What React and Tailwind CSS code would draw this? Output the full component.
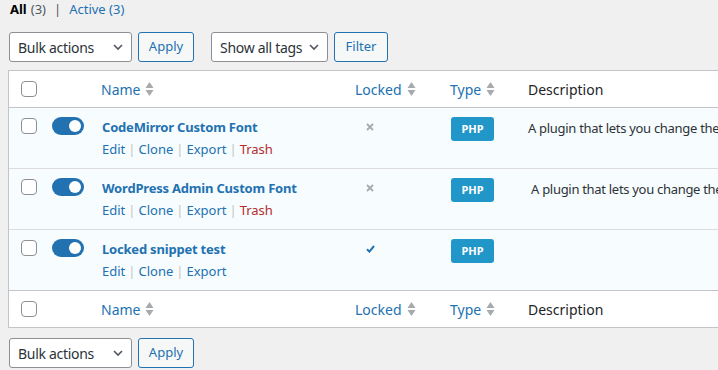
import React from 'react'

const font = { fontFamily: '"Noto Sans", "Open Sans", sans-serif' }

function SortIcon() {
  return (
    <svg width="9" height="16" viewBox="0 0 9 16" className="ml-[5px] shrink-0">
      <path d="M4.5 1 L8.5 7 L0.5 7 Z" fill="#a7aaad" />
      <path d="M4.5 15 L8.5 9 L0.5 9 Z" fill="#a7aaad" />
    </svg>
  )
}

function Checkbox() {
  return <div className="w-4 h-4 bg-white border border-[#8c8f94] rounded-[4px]" />
}

function Toggle() {
  return (
    <div className="w-8 h-[18px] rounded-full bg-[#2271b1] flex items-center justify-end pr-[3px]">
      <div className="w-3 h-3 rounded-full bg-white" />
    </div>
  )
}

function Select({ label, width }) {
  return (
    <div className={`${width} h-[30px] bg-white border border-[#8c8f94] rounded-[3px] flex items-center justify-between pl-2 pr-[7px] text-[14px] tracking-[-0.3px] text-[#2c3338]`}>
      <span>{label}</span>
      <svg width="12" height="12" viewBox="0 0 12 12">
        <path d="M2 4 L6 8 L10 4" fill="none" stroke="#50575e" strokeWidth="1.6" />
      </svg>
    </div>
  )
}

function Button({ label, width }) {
  return (
    <div className={`${width} h-[30px] bg-[#f6f7f7] border border-[#2271b1] rounded-[3px] flex items-center justify-center text-[13px] text-[#2271b1]`}>
      {label}
    </div>
  )
}

const cols = 'grid grid-cols-[34px_48px_254px_95px_78px_1fr]'

function HeaderRow({ border }) {
  return (
    <div className={`${cols} h-[37px] items-center bg-white text-[14px] ${border}`}>
      <div className="pl-3 flex"><Checkbox /></div>
      <div />
      <div className="pl-[10px] flex items-center text-[#2271b1]">Name<SortIcon /></div>
      <div className="pl-[10px] flex items-center text-[#2271b1]">Locked<SortIcon /></div>
      <div className="pl-[10px] flex items-center text-[#2271b1]">Type<SortIcon /></div>
      <div className="pl-[10px] text-[#1d2327]">Description</div>
    </div>
  )
}

const snippets = [
  { name: 'CodeMirror Custom Font', locked: false, desc: 'A plugin that lets you change the font of the code editor', trash: true },
  { name: 'WordPress Admin Custom Font', locked: false, desc: '\u00a0A plugin that lets you change the admin font', trash: true },
  { name: 'Locked snippet test', locked: true, desc: '', trash: false },
]

function Row({ s }) {
  const actions = ['Edit', 'Clone', 'Export']
  return (
    <div className={`${cols} h-[61px] bg-[#f7fcfe] border-b border-[#dcdcde]`}>
      <div className="pl-3 pt-[10px]"><Checkbox /></div>
      <div className="pl-[9px] pt-[9px]"><Toggle /></div>
      <div className="pl-[11px] pt-[9px]">
        <div className="text-[13px] font-bold text-[#2271b1] leading-[20px] tracking-[-0.2px]">{s.name}</div>
        <div className="text-[13px] leading-[18px] mt-[3px] flex items-center">
          {actions.map((a, i) => (
            <React.Fragment key={a}>
              {i > 0 && <span className="text-[#c3c4c7] mx-[3px]">|</span>}
              <span className="text-[#2271b1]">{a}</span>
            </React.Fragment>
          ))}
          {s.trash && (
            <>
              <span className="text-[#c3c4c7] mx-[3px]">|</span>
              <span className="text-[#b32d2e]">Trash</span>
            </>
          )}
        </div>
      </div>
      <div className="pl-[21px] pt-[15px]">
        {s.locked ? (
          <svg width="9" height="8" viewBox="0 0 9 8">
            <path d="M1 4.2 L3.4 6.6 L8 1" fill="none" stroke="#2271b1" strokeWidth="2" />
          </svg>
        ) : (
          <svg width="8" height="8" viewBox="0 0 8 8">
            <path d="M1 1 L7 7 M7 1 L1 7" stroke="#a7aaad" strokeWidth="1.8" />
          </svg>
        )}
      </div>
      <div className="pl-[11px] pt-[9px]">
        <div className="w-[43px] h-6 rounded-[3px] bg-[#2196c9] text-white text-[11px] font-bold flex items-center justify-center">PHP</div>
      </div>
      <div className="pl-[10px] pt-[11px] text-[13px] tracking-[-0.3px] text-[#2c3338] whitespace-nowrap">{s.desc}</div>
    </div>
  )
}

export default function App() {
  return (
    <div className="w-[718px] h-[370px] bg-[#f0f0f1] overflow-hidden" style={font}>
      <div className="pl-[10px] h-[20px] text-[13px] flex items-center gap-1">
        <span className="font-bold text-black">All</span>
        <span className="text-[#50575e]">(3)</span>
        <span className="text-[#50575e] mx-1">|</span>
        <span className="text-[#2271b1]">Active (3)</span>
      </div>
      <div className="flex items-center pl-[9px] mt-[12px]">
        <Select label="Bulk actions" width="w-[123px]" />
        <div className="ml-[6px]"><Button label="Apply" width="w-[56px]" /></div>
        <div className="ml-[17px]"><Select label="Show all tags" width="w-[117px]" /></div>
        <div className="ml-[6px]"><Button label="Filter" width="w-[54px]" /></div>
      </div>
      <div className="ml-2 mt-[8px] w-[760px] border border-[#c3c4c7]">
        <HeaderRow border="border-b border-[#c3c4c7]" />
        {snippets.map(s => <Row key={s.name} s={s} />)}
        <HeaderRow border="border-t border-[#c3c4c7] -mt-px" />
      </div>
      <div className="flex items-center pl-[9px] mt-[10px]">
        <Select label="Bulk actions" width="w-[123px]" />
        <div className="ml-[6px]"><Button label="Apply" width="w-[56px]" /></div>
      </div>
    </div>
  )
}
